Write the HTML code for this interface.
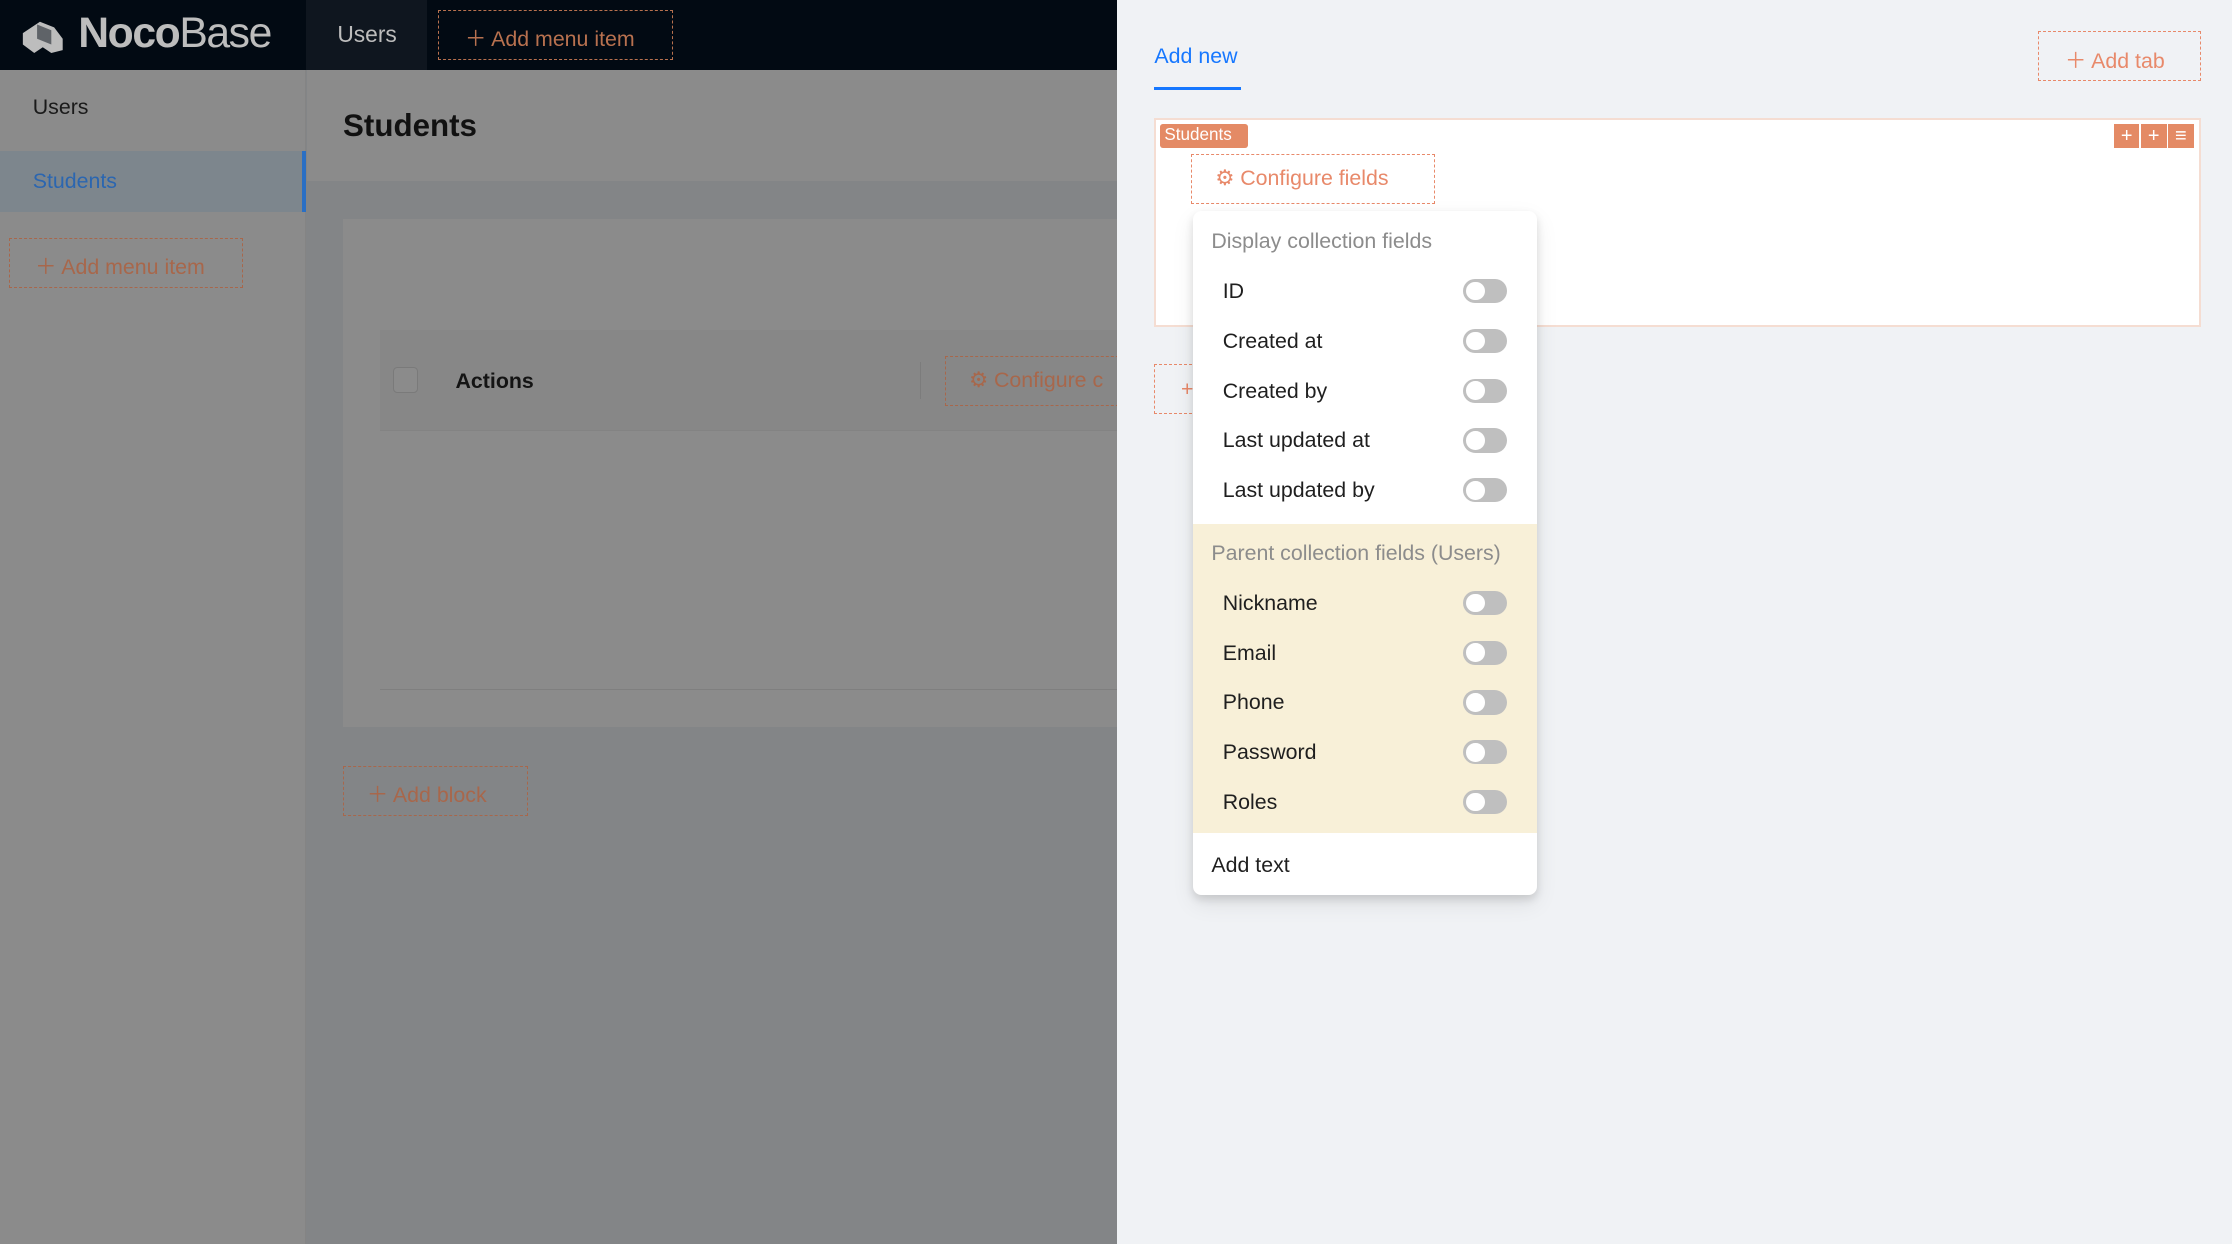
<!DOCTYPE html>
<html><head><meta charset="utf-8"><style>
*{box-sizing:border-box;margin:0;padding:0}
html,body{width:2232px;height:1244px;overflow:hidden}
body{font-family:"Liberation Sans",sans-serif;}
#r{zoom:1.42347;width:1568px;height:874px;position:relative;background:#838587;overflow:hidden}
.a{position:absolute}
.dash{border:1px dashed #a8674b;color:#a8674b}
.dash2{border:1px dashed #e8896a;color:#e8896a}
.tog{position:absolute;left:1028px;width:31px;height:17px;border-radius:9px;background:#bfbfbf}
.tog:after{content:"";position:absolute;left:2px;top:2px;width:13px;height:13px;border-radius:50%;background:#fff}
.it{position:absolute;left:859px;font-size:15px;color:#1f1f1f}
</style></head><body><div id="r">
<div class="a" style="left:0;top:0;width:785px;height:49px;background:#020a13"></div>
<div class="a" style="left:215px;top:0;width:85px;height:49px;background:#0f161f"></div>
<svg class="a" style="left:14px;top:11px" width="34" height="28" viewBox="0 0 34 28"><path d="M2 12 L14 4 L24 8 L30 16 L30 24 L22 26 L16 22 L10 26 L2 20Z" fill="#bdbdbd"/><path d="M12 6 L22 10 L22 20 L12 16Z" fill="#020a13" opacity=".5"/></svg>
<div class="a" style="left:55px;top:6px;font-size:30px;color:#bdbdbd;letter-spacing:-1px"><b>Noco</b><span style="font-weight:300">Base</span></div>
<div class="a" style="left:237px;top:15px;font-size:16px;color:#bdbdbd">Users</div>
<div class="a" style="left:308px;top:7px;width:165px;height:35px;font-size:15px;padding:8px 0 0 18px;border:1px dashed #b8714f;color:#b8714f">＋ Add menu item</div>
<div class="a" style="left:0;top:49px;width:215px;height:825px;background:#8b8b8b;border-right:1px solid #848484"></div>
<div class="a" style="left:23px;top:67px;font-size:15px;color:#1a1a1a">Users</div>
<div class="a" style="left:0;top:106px;width:215px;height:43px;background:#7d868d;border-right:3px solid #2a6fc4"></div>
<div class="a" style="left:23px;top:119px;font-size:15px;color:#2b66b0">Students</div>
<div class="a dash" style="left:6px;top:167px;width:165px;height:35px;font-size:15px;padding:8px 0 0 18px;z-index:2">＋ Add menu item</div>
<div class="a" style="left:216px;top:49px;width:569px;height:78px;background:#8b8b8b"></div>
<div class="a" style="left:241px;top:76px;font-size:22px;font-weight:bold;color:#111">Students</div>
<div class="a" style="left:241px;top:154px;width:544px;height:357px;background:#8b8b8b"></div>
<div class="a" style="left:267px;top:232px;width:518px;height:71px;background:#878787;border-bottom:1px solid #838383"></div>
<div class="a" style="left:276px;top:258px;width:18px;height:18px;border:1px solid #7a7a7a;border-radius:3px;background:#8b8b8b"></div>
<div class="a" style="left:320px;top:259px;font-size:15px;font-weight:bold;color:#141414">Actions</div>
<div class="a" style="left:646px;top:254px;width:1px;height:26px;background:#7c7c7c"></div>
<div class="a dash" style="left:664px;top:250px;width:140px;height:35px;font-size:15px;padding:8px 0 0 16px;z-index:2">⚙ Configure c</div>
<div class="a" style="left:267px;top:484px;width:518px;height:1px;background:#7f7f7f"></div>
<div class="a dash" style="left:241px;top:538px;width:130px;height:35px;font-size:15px;padding:8px 0 0 16px;z-index:2">＋ Add block</div>
<div class="a" style="left:785px;top:0;width:783px;height:874px;background:#f0f2f5;z-index:3"></div>
<div style="position:absolute;left:0;top:0;width:1568px;height:874px;z-index:4">
<div class="a" style="left:811px;top:31px;font-size:15px;color:#1677ff">Add new</div>
<div class="a" style="left:811px;top:61px;width:61px;height:2px;background:#1677ff"></div>
<div class="a dash2" style="left:1432px;top:22px;width:114px;height:35px;font-size:15px;padding:8px 0 0 18px">＋ Add tab</div>
<div class="a" style="left:811px;top:83px;width:735px;height:147px;background:#fff;border:2px solid #f5ddd2"></div>
<div class="a" style="left:815px;top:87px;width:62px;height:17px;background:#e48a65;border-radius:2px;color:#fff;font-size:12px;padding:1px 3px">Students</div>
<div class="a" style="left:1485px;top:87px;width:56px;height:17px;display:flex;gap:1px"><div style="flex:1;background:#e48a65;color:#fff;font-size:14px;text-align:center;line-height:17px">+</div><div style="flex:1;background:#e48a65;color:#fff;font-size:14px;text-align:center;line-height:17px">+</div><div style="flex:1;background:#e48a65;color:#fff;font-size:14px;text-align:center;line-height:17px">≡</div></div>
<div class="a dash2" style="left:837px;top:108px;width:171px;height:35px;font-size:15px;padding:8px 0 0 16px">⚙ Configure fields</div>
<div class="a dash2" style="left:811px;top:256px;width:30px;height:35px;font-size:15px;padding:8px 0 0 18px">+</div>
<div class="a" style="left:838px;top:148px;width:242px;height:481px;background:#fff;border-radius:6px;box-shadow:0 6px 16px rgba(0,0,0,.08),0 3px 6px rgba(0,0,0,.12)"></div>
<div class="a" style="left:851px;top:161px;font-size:15px;color:#8c8c8c">Display collection fields</div>
<div class="it" style="top:196px">ID</div><div class="tog" style="top:196px"></div>
<div class="it" style="top:231px">Created at</div><div class="tog" style="top:231px"></div>
<div class="it" style="top:266px">Created by</div><div class="tog" style="top:266px"></div>
<div class="it" style="top:301px">Last updated at</div><div class="tog" style="top:301px"></div>
<div class="it" style="top:336px">Last updated by</div><div class="tog" style="top:336px"></div>
<div class="a" style="left:838px;top:368px;width:242px;height:217px;background:#f8f0d8"></div>
<div class="a" style="left:851px;top:380px;font-size:15px;color:#8c8c8c">Parent collection fields (Users)</div>
<div class="it" style="top:415px">Nickname</div><div class="tog" style="top:415px"></div>
<div class="it" style="top:450px">Email</div><div class="tog" style="top:450px"></div>
<div class="it" style="top:485px">Phone</div><div class="tog" style="top:485px"></div>
<div class="it" style="top:520px">Password</div><div class="tog" style="top:520px"></div>
<div class="it" style="top:555px">Roles</div><div class="tog" style="top:555px"></div>
<div class="a" style="left:851px;top:599px;font-size:15px;color:#1f1f1f">Add text</div>
</div>
</div></body></html>
